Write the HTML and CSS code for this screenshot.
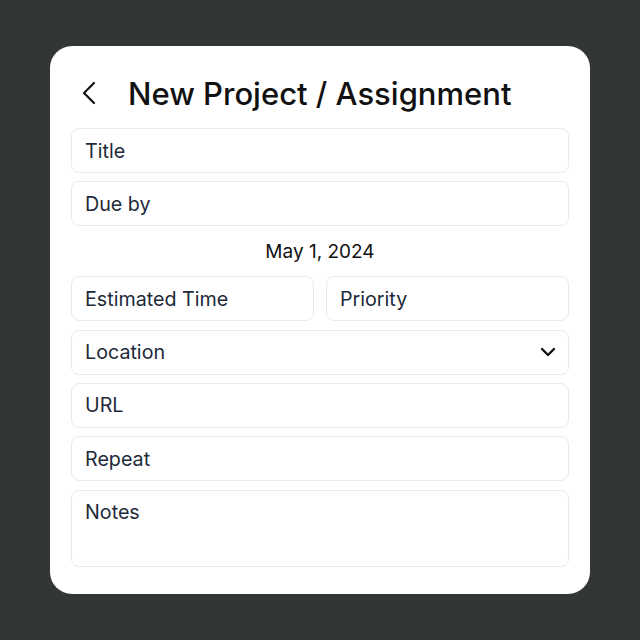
FILE: index.html
```html
<!DOCTYPE html>
<html>
<head>
<meta charset="utf-8">
<link rel="stylesheet" href="styles.css">
</head>
<body>
<div class="card">
  <div class="header">
    <svg class="back" width="16" height="24" viewBox="0 0 16 24"><path d="M13 2 L3 12 L13 22" fill="none" stroke="#111" stroke-width="2.2" stroke-linecap="round" stroke-linejoin="round"/></svg>
    <h1 class="title">New Project / Assignment</h1>
  </div>
  <div class="form">
    <div class="field">Title</div>
    <div class="field">Due by</div>
    <div class="date">May 1, 2024</div>
    <div class="row">
      <div class="field">Estimated Time</div>
      <div class="field">Priority</div>
    </div>
    <div class="field select">Location
      <svg width="16" height="10" viewBox="0 0 16 10"><path d="M2 2 L8 8 L14 2" fill="none" stroke="#111" stroke-width="2.4" stroke-linecap="round" stroke-linejoin="round"/></svg>
    </div>
    <div class="field">URL</div>
    <div class="field">Repeat</div>
    <div class="field notes">Notes</div>
  </div>
</div>
</body>
</html>
```
FILE: styles.css
```css
* { box-sizing: border-box; }
html, body { margin: 0; padding: 0; }
body {
  background: #323637;
  height: 640px;
  display: flex;
  align-items: center;
  justify-content: center;
  font-family: Inter, "Noto Sans", sans-serif;
}
.card {
  width: 540px;
  height: 548px;
  background: #fff;
  border-radius: 22px;
  padding: 0 21px 27px 21px;
  display: flex;
  flex-direction: column;
}
.header {
  height: 82px;
  flex-shrink: 0;
  display: flex;
  align-items: center;
  padding-top: 12px;
}
.back { margin-left: 10px; margin-right: 31px; }
.title {
  margin: 0;
  font-size: 31px;
  font-weight: 500;
  color: #111;
  letter-spacing: 0;
}
.form {
  display: flex;
  flex-direction: column;
  gap: 8.3px;
}
.field {
  height: 45px;
  flex-shrink: 0;
  border: 1px solid #e4ecf2;
  border-radius: 8px;
  padding: 0 13px;
  display: flex;
  align-items: center;
  font-size: 19.7px;
  color: #1e2a3a;
}
.date {
  height: 33.5px;
  flex-shrink: 0;
  display: flex;
  align-items: center;
  justify-content: center;
  font-size: 19px;
  color: #111;
}
.row {
  display: grid;
  grid-template-columns: 1fr 1fr;
  gap: 12px;
}
.select { justify-content: space-between; padding-right: 12px; }
.notes {
  height: 77px;
  align-items: flex-start;
  padding-top: 9px;
}
```
